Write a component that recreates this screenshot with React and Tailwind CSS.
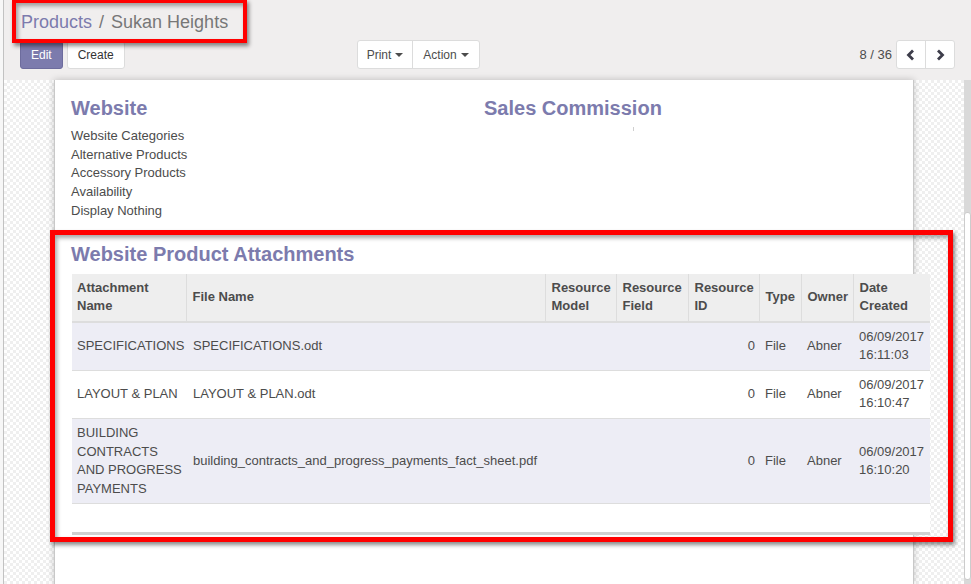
import React from 'react';

const font = "font-['Liberation_Sans',Arial,sans-serif]";

const websiteItems = [
  'Website Categories',
  'Alternative Products',
  'Accessory Products',
  'Availability',
  'Display Nothing',
];

const columns = [
  { label: ['Attachment', 'Name'], width: 'w-[114px]' },
  { label: ['File Name'], width: 'w-[359px]' },
  { label: ['Resource', 'Model'], width: 'w-[71px]' },
  { label: ['Resource', 'Field'], width: 'w-[72px]' },
  { label: ['Resource', 'ID'], width: 'w-[71px]' },
  { label: ['Type'], width: 'w-[42px]' },
  { label: ['Owner'], width: 'w-[52px]' },
  { label: ['Date', 'Created'], width: 'w-[77px]' },
];

const attachments = [
  {
    name: ['SPECIFICATIONS'],
    file: 'SPECIFICATIONS.odt',
    date: ['06/09/2017', '16:11:03'],
  },
  {
    name: ['LAYOUT & PLAN'],
    file: 'LAYOUT & PLAN.odt',
    date: ['06/09/2017', '16:10:47'],
  },
  {
    name: ['BUILDING', 'CONTRACTS', 'AND PROGRESS', 'PAYMENTS'],
    file: 'building_contracts_and_progress_payments_fact_sheet.pdf',
    date: ['06/09/2017', '16:10:20'],
  },
];

const Lines = ({ lines }) =>
  lines.map((l, i) => (
    <React.Fragment key={i}>
      {i > 0 && <br />}
      {l}
    </React.Fragment>
  ));

const Caret = () => (
  <span className="ml-[4px] inline-block w-0 h-0 border-x-[4px] border-x-transparent border-t-[4px] border-t-[#4c4c4c] align-middle" />
);

const Chevron = ({ dir }) => (
  <svg width="10" height="12" viewBox="0 0 10 12">
    <polyline
      points={dir === 'left' ? '7,1.5 2.5,6 7,10.5' : '3,1.5 7.5,6 3,10.5'}
      fill="none"
      stroke="#3d3d4a"
      strokeWidth="2.8"
    />
  </svg>
);

const ControlPanel = () => (
  <div className="bg-[#f0eeee] h-[80px] pl-[16px] pr-[16px] pt-[9px] shrink-0">
    {/* breadcrumb */}
    <div className="h-[26px] leading-[26px] text-[18px] pl-[1px]">
      <span className="text-[#7c7bad]">Products</span>
      <span className="text-[#777777] px-[7px]">/</span>
      <span className="text-[#777777]">Sukan Heights</span>
    </div>

    {/* buttons row */}
    <div className="flex items-center mt-[5px] h-[29px] text-[12px]">
      <div className="w-[337px] flex gap-[4px]">
        <button className="h-[28px] px-[10px] rounded-[3px] bg-[#7c7bad] text-white border border-[#6d6c9d]">
          Edit
        </button>
        <button className="h-[28px] px-[10px] rounded-[3px] bg-white text-[#333] border border-[#dcdcdc]">
          Create
        </button>
      </div>
      <div className="flex h-[29px] rounded-[3px] border border-[#dcdcdc] bg-white text-[#4c4c4c]">
        <button className="w-[55px] flex items-center justify-center border-r border-[#dcdcdc]">
          Print
          <Caret />
        </button>
        <button className="w-[66px] flex items-center justify-center">
          Action
          <Caret />
        </button>
      </div>
      <div className="flex-1" />
      <span className="text-[13px] text-[#4c4c4c] mr-[4px]">8 / 36</span>
      <div className="flex h-[29px] rounded-[3px] border border-[#dcdcdc] bg-white">
        <button className="w-[29px] flex items-center justify-center border-r border-[#dcdcdc]">
          <Chevron dir="left" />
        </button>
        <button className="w-[28px] flex items-center justify-center">
          <Chevron dir="right" />
        </button>
      </div>
    </div>
  </div>
);

const AttachmentsTable = () => (
  <table className="table-fixed border-collapse w-[858px] ml-[1px] text-[13px] leading-[18.6px] text-[#4c4c4c]">
    <colgroup>
      {columns.map((c, i) => (
        <col key={i} className={c.width} />
      ))}
    </colgroup>
    <thead>
      <tr className="bg-[#eeeeee] border-b-2 border-[#dddddd]">
        {columns.map((c, i) => (
          <th
            key={i}
            className={`text-left font-bold align-middle py-[5px] whitespace-nowrap ${
              i === 0 ? 'pl-[5px] pr-[4px]' : 'px-[6px] border-l border-[#dddddd]'
            }`}
          >
            <Lines lines={c.label} />
          </th>
        ))}
      </tr>
    </thead>
    <tbody>
      {attachments.map((r, i) => (
        <tr
          key={i}
          className={`border-t border-[#dddddd] ${i % 2 === 0 ? 'bg-[#ededf5]' : 'bg-white'}`}
        >
          <td className="pl-[5px] pr-[4px] py-[5px] align-middle whitespace-nowrap">
            <Lines lines={r.name} />
          </td>
          <td className="px-[7px] align-middle whitespace-nowrap">{r.file}</td>
          <td className="px-[6px] align-middle" />
          <td className="px-[6px] align-middle" />
          <td className="pl-[6px] pr-[4px] align-middle text-right">0</td>
          <td className="px-[6px] align-middle">File</td>
          <td className="px-[6px] align-middle">Abner</td>
          <td className="pl-[6px] pr-[2px] py-[5px] align-middle whitespace-nowrap">
            <Lines lines={r.date} />
          </td>
        </tr>
      ))}
      <tr className="border-t border-[#dddddd] border-b-[3px] border-b-[#d0d0d0] bg-white">
        <td colSpan={8} className="h-[30px]" />
      </tr>
    </tbody>
  </table>
);

const Sheet = () => (
  <div className="w-[860px] shrink-0 bg-white border-x border-[#c8c8c8] shadow-[0_0_7px_rgba(0,0,0,0.22)] pt-[16px] px-[16px]">
    <div className="flex">
      <div className="w-[413px]">
        <h2 className="text-[20px] leading-[24px] font-bold text-[#7c7bad]">Website</h2>
        <ul className="mt-[7px] text-[13px] leading-[18.7px] text-[#4c4c4c]">
          {websiteItems.map((t) => (
            <li key={t}>{t}</li>
          ))}
        </ul>
      </div>
      <div className="flex-1">
        <h2 className="text-[20px] leading-[24px] font-bold text-[#7c7bad]">Sales Commission</h2>
        <div className="ml-[149px] mt-[7px] w-px h-[4px] bg-[#cfcfcf]" />
      </div>
    </div>

    <h2 className="mt-[21px] text-[20px] leading-[24px] font-bold text-[#7c7bad]">
      Website Product Attachments
    </h2>
    <div className="mt-[8px]">
      <AttachmentsTable />
    </div>
  </div>
);

export default function App() {
  return (
    <div className={`relative w-[971px] h-[584px] overflow-hidden flex bg-white ${font}`}>
      <div className="w-[3px] bg-[#f7f7f7]" />
      <div className="w-px bg-[#c2c2c2]" />

      <div className="flex-1 flex flex-col min-w-0">
        <ControlPanel />
        <div className="flex-1 flex min-h-0">
          <div className="flex-1 flex justify-center bg-[#f9f9f9] bg-[image:repeating-conic-gradient(#efefef_0_25%,#ffffff_0_50%)] bg-[length:6px_6px]">
            <Sheet />
          </div>
          {/* scrollbar */}
          <div className="w-[7px] bg-[#d9d9d9] flex flex-col">
            <div className="mt-[132px] h-[368px] bg-white border border-[#cccccc] rounded-[3px]" />
          </div>
        </div>
      </div>

      {/* annotation boxes */}
      <div className="absolute left-[12px] top-[-1px] w-[235px] h-[44px] border-[4px] border-[#ff0000] shadow-[2px_3px_4px_rgba(0,0,0,0.45),inset_2px_3px_4px_rgba(0,0,0,0.35)]" />
      <div className="absolute left-[50px] top-[230px] w-[903px] h-[312px] border-[5px] border-[#ff0000] shadow-[2px_3px_4px_rgba(0,0,0,0.45),inset_2px_3px_4px_rgba(0,0,0,0.35)]" />
    </div>
  );
}
